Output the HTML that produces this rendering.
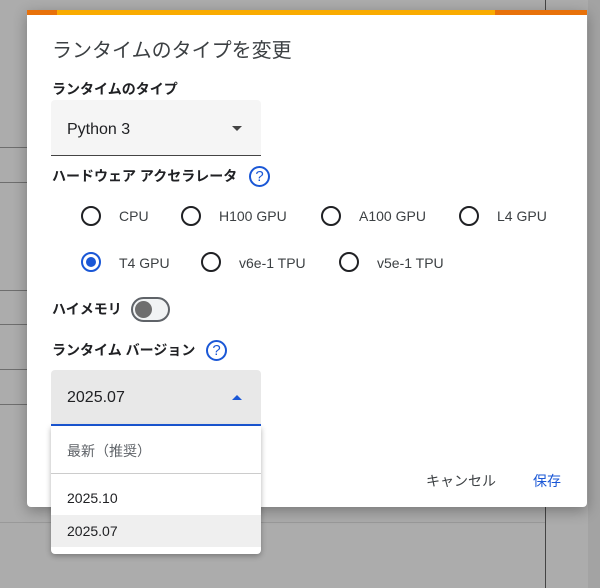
<!DOCTYPE html>
<html><head><meta charset="utf-8"><style>
*{box-sizing:border-box;margin:0;padding:0}
body{width:600px;height:588px;overflow:hidden;background:#acacac;font-family:"Liberation Sans","Noto Sans CJK JP",sans-serif;position:relative;color:#202124}
.abs{position:absolute}
.hl{position:absolute;left:0;width:27px;height:1px;background:#6e6e6e}
.dlg{left:27px;top:10px;width:560px;height:497px;background:#fff;border-radius:0 0 4px 4px;box-shadow:0 4px 14px rgba(0,0,0,.3)}
.lbl{font-size:14px;font-weight:bold;color:#202124}
.radio{position:absolute;width:20px;height:20px;border:2px solid #202124;border-radius:50%}
.radio.on{border-color:#1a57d6}
.radio.on:after{content:"";position:absolute;left:3px;top:3px;width:10px;height:10px;border-radius:50%;background:#1a57d6}
.rt{position:absolute;font-size:14px;color:#3c4043}
.q{position:absolute;width:21px;height:21px;border:2px solid #1a57d6;border-radius:50%;color:#1a57d6;font-size:15px;font-weight:normal;text-align:center;line-height:18px}
</style></head><body>
<div class="abs" style="left:545px;top:0;width:1px;height:588px;background:#444"></div>
<div class="abs" style="left:0;top:522px;width:545px;height:1px;background:#999"></div>
<div class="abs" style="left:588px;top:0;width:12px;height:588px;background:#a3a3a3"></div>
<div class="hl" style="top:147px"></div><div class="hl" style="top:182px"></div>
<div class="hl" style="top:290px"></div><div class="hl" style="top:324px"></div>
<div class="hl" style="top:369px"></div><div class="hl" style="top:404px"></div>
<div class="abs dlg">
 <div class="abs" style="left:0;top:0;width:560px;height:5px;background:#f9ab00"></div>
 <div class="abs" style="left:0;top:0;width:30px;height:5px;background:#e8710a"></div>
 <div class="abs" style="left:468px;top:0;width:92px;height:5px;background:#e8710a"></div>
 <div class="abs" style="left:25px;top:24px;font-size:20px;color:#3c4043">ランタイムのタイプを変更</div>
 <div class="abs lbl" style="left:25px;top:69px">ランタイムのタイプ</div>
 <div class="abs" style="left:24px;top:90px;width:210px;height:56px;background:#f5f5f5;border-radius:4px 4px 0 0;border-bottom:1px solid #444"></div>
 <div class="abs" style="left:40px;top:111px;font-size:16px;color:#202124">Python 3</div>
 <div class="abs" style="left:205px;top:116px;width:0;height:0;border-left:5px solid transparent;border-right:5px solid transparent;border-top:5px solid #444"></div>
 <div class="abs lbl" style="left:25px;top:156px">ハードウェア アクセラレータ</div>
 <div class="q" style="left:222px;top:156px">?</div>
 <div class="radio" style="left:54px;top:196px"></div><div class="rt" style="left:92px;top:198px">CPU</div>
 <div class="radio" style="left:154px;top:196px"></div><div class="rt" style="left:192px;top:198px">H100 GPU</div>
 <div class="radio" style="left:294px;top:196px"></div><div class="rt" style="left:332px;top:198px">A100 GPU</div>
 <div class="radio" style="left:432px;top:196px"></div><div class="rt" style="left:470px;top:198px">L4 GPU</div>
 <div class="radio on" style="left:54px;top:242px"></div><div class="rt" style="left:92px;top:245px">T4 GPU</div>
 <div class="radio" style="left:174px;top:242px"></div><div class="rt" style="left:212px;top:245px">v6e-1 TPU</div>
 <div class="radio" style="left:312px;top:242px"></div><div class="rt" style="left:350px;top:245px">v5e-1 TPU</div>
 <div class="abs lbl" style="left:25px;top:289px">ハイメモリ</div>
 <div class="abs" style="left:104px;top:287px;width:39px;height:25px;border:2px solid #5f6368;border-radius:13px;background:#f1f3f4"></div>
 <div class="abs" style="left:108px;top:291px;width:17px;height:17px;border-radius:50%;background:#6e6e6e"></div>
 <div class="abs lbl" style="left:25px;top:330px">ランタイム バージョン</div>
 <div class="q" style="left:179px;top:330px">?</div>
 <div class="abs" style="left:24px;top:360px;width:210px;height:56px;background:#e8e8e8;border-radius:4px 4px 0 0;border-bottom:2px solid #1a57d6"></div>
 <div class="abs" style="left:40px;top:379px;font-size:16px">2025.07</div>
 <div class="abs" style="left:205px;top:385px;width:0;height:0;border-left:5px solid transparent;border-right:5px solid transparent;border-bottom:5px solid #1a57d6"></div>
 <div class="abs" style="left:399px;top:461px;font-size:14px;color:#3c4043">キャンセル</div>
 <div class="abs" style="left:506px;top:461px;font-size:14px;color:#1a57d6">保存</div>
</div>
<div class="abs" style="left:51px;top:426px;width:210px;height:128px;background:#fff;border-radius:0 0 4px 4px;box-shadow:0 2px 6px rgba(0,0,0,.3)">
 <div class="abs" style="left:16px;top:15px;font-size:14px;color:#5f6368">最新（推奨）</div>
 <div class="abs" style="left:0;top:47px;width:210px;height:1px;background:#ccc"></div>
 <div class="abs" style="left:16px;top:64px;font-size:14px">2025.10</div>
 <div class="abs" style="left:0;top:89px;width:210px;height:32px;background:#efefef"></div>
 <div class="abs" style="left:16px;top:97px;font-size:14px">2025.07</div>
</div>
</body></html>
